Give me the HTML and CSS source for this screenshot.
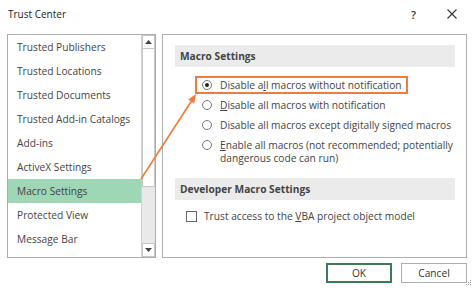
FILE: index.html
```html
<!DOCTYPE html>
<html>
<head>
<meta charset="utf-8">
<link rel="stylesheet" href="styles.css">
</head>
<body>
<div class="dialog">
  <div class="titlebar">
    <span class="title">Trust Center</span>
    <span class="help">?</span>
    <svg class="close" width="10" height="10" viewBox="0 0 10 10"><path d="M0.5 0.5 L9.5 9.5 M9.5 0.5 L0.5 9.5" stroke="#333" stroke-width="1.1" fill="none"/></svg>
  </div>
  <div class="main">
    <div class="listbox">
      <ul class="list">
        <li>Trusted Publishers</li>
        <li>Trusted Locations</li>
        <li>Trusted Documents</li>
        <li>Trusted Add-in Catalogs</li>
        <li>Add-ins</li>
        <li>ActiveX Settings</li>
        <li class="selected">Macro Settings</li>
        <li>Protected View</li>
        <li>Message Bar</li>
      </ul>
      <div class="scrollbar">
        <div class="sbtn"><svg width="7" height="4" viewBox="0 0 7 4"><path d="M0 4 L3.5 0 L7 4 Z" fill="#444"/></svg></div>
        <div class="thumb"></div>
        <div class="track"></div>
        <div class="sbtn"><svg width="7" height="4" viewBox="0 0 7 4"><path d="M0 0 L3.5 4 L7 0 Z" fill="#444"/></svg></div>
      </div>
    </div>
    <div class="panel">
      <div class="section-head">Macro Settings</div>
      <div class="options">
        <div class="option marked"><span class="radio checked"></span><span class="label">Disable a<u>l</u>l macros without notification</span></div>
        <div class="option"><span class="radio"></span><span class="label"><u>D</u>isable all macros with notification</span></div>
        <div class="option"><span class="radio"></span><span class="label">Disable all macros except digitally signed macros</span></div>
        <div class="option"><span class="radio"></span><span class="label"><u>E</u>nable all macros (not recommended; potentially<br>dangerous code can run)</span></div>
      </div>
      <div class="section-head dev">Developer Macro Settings</div>
      <div class="check-row"><span class="checkbox"></span><span class="label">Trust access to the <u>V</u>BA project object model</span></div>
    </div>
  </div>
  <div class="footer">
    <button class="btn ok">OK</button>
    <button class="btn">Cancel</button>
    <svg class="grip" width="6" height="6" viewBox="0 0 6 6"><g fill="#999"><rect x="4" y="0" width="1" height="1"/><rect x="2" y="2" width="1" height="1"/><rect x="4" y="2" width="1" height="1"/><rect x="0" y="4" width="1" height="1"/><rect x="2" y="4" width="1" height="1"/><rect x="4" y="4" width="1" height="1"/></g></svg>
  </div>
  <svg class="arrow" width="474" height="290" viewBox="0 0 474 290">
    <line x1="141" y1="179" x2="191.5" y2="101" stroke="#ef7b3c" stroke-width="1.6"/>
    <path d="M196 94 L194.2 103.6 L188.2 99.6 Z" fill="#ef7b3c"/>
  </svg>
</div>
</body>
</html>
```
FILE: styles.css
```css
* { box-sizing: border-box; }
html, body { margin: 0; padding: 0; background: #fff; }
body { width: 474px; height: 290px; overflow: hidden; font-family: "Open Sans", "Noto Sans", sans-serif; font-size: 10.2px; color: #444; }
.dialog { position: relative; width: 474px; height: 290px; }
.titlebar { height: 28px; display: flex; align-items: center; padding-left: 8px; }
.title { font-size: 10px; color: #222; flex: 1; }
.help { font-size: 11px; color: #333; font-weight: 600; margin-right: 31px; }
.close { margin-right: 17px; }
.main { display: flex; margin-top: 6px; padding-left: 7px; gap: 6px; height: 224px; }
.listbox { width: 149px; border: 1px solid #adadad; display: flex; }
.list { list-style: none; margin: 0; padding: 0; flex: 1; }
.list li { height: 24px; line-height: 24px; padding-left: 9px; white-space: nowrap; }
.list li.selected { background: #9fd6b6; }
.scrollbar { width: 14px; border-left: 1px solid #d0d0d0; background: #e9e9e9; display: flex; flex-direction: column; }
.sbtn { height: 14px; background: #fff; border: 1px solid #c6c6c6; display: flex; align-items: center; justify-content: center; }
.thumb { height: 138px; background: #fff; border: 1px solid #c6c6c6; border-top: none; }
.track { flex: 1; }
.panel { width: 305px; border: 1px solid #adadad; padding: 10px 11px 0 12px; display: flex; flex-direction: column; }
.section-head { height: 22px; background: #ebebeb; font-weight: 700; line-height: 22px; padding-left: 5px; color: #444; }
.options { margin: 9px 0 0 20px; display: flex; flex-direction: column; align-items: flex-start; gap: 2px; }
.option { display: flex; align-items: flex-start; flex: none; border: 2px solid transparent; padding: 0.5px 4px 0.5px 5px; line-height: 13px; white-space: nowrap; }
.option.marked { border-color: #ef7b3c; }
.label { white-space: nowrap; }
.radio { width: 10px; height: 10px; border: 1px solid #777; border-radius: 50%; margin-top: 1.5px; margin-right: 8px; flex: none; display: flex; align-items: center; justify-content: center; }
.radio.checked::after { content: ""; width: 4px; height: 4px; border-radius: 50%; background: #222; }
.section-head.dev { margin-top: 11px; }
.check-row { display: flex; align-items: center; margin: 10px 0 0 11px; line-height: 13px; }
.checkbox { width: 11px; height: 11px; border: 1px solid #666; margin-right: 7px; flex: none; }
.footer { display: flex; justify-content: flex-end; align-items: flex-start; padding-right: 7px; margin-top: 5px; gap: 9px; position: relative; }
.btn { width: 66px; height: 20px; background: #fff; border: 1px solid #adadad; font-family: inherit; font-size: 10.2px; color: #333; padding: 0; }
.btn.ok { border: 2px solid #3c7a58; }
.grip { position: absolute; right: 2px; top: 17px; }
.arrow { position: absolute; left: 0; top: 0; pointer-events: none; }
```
